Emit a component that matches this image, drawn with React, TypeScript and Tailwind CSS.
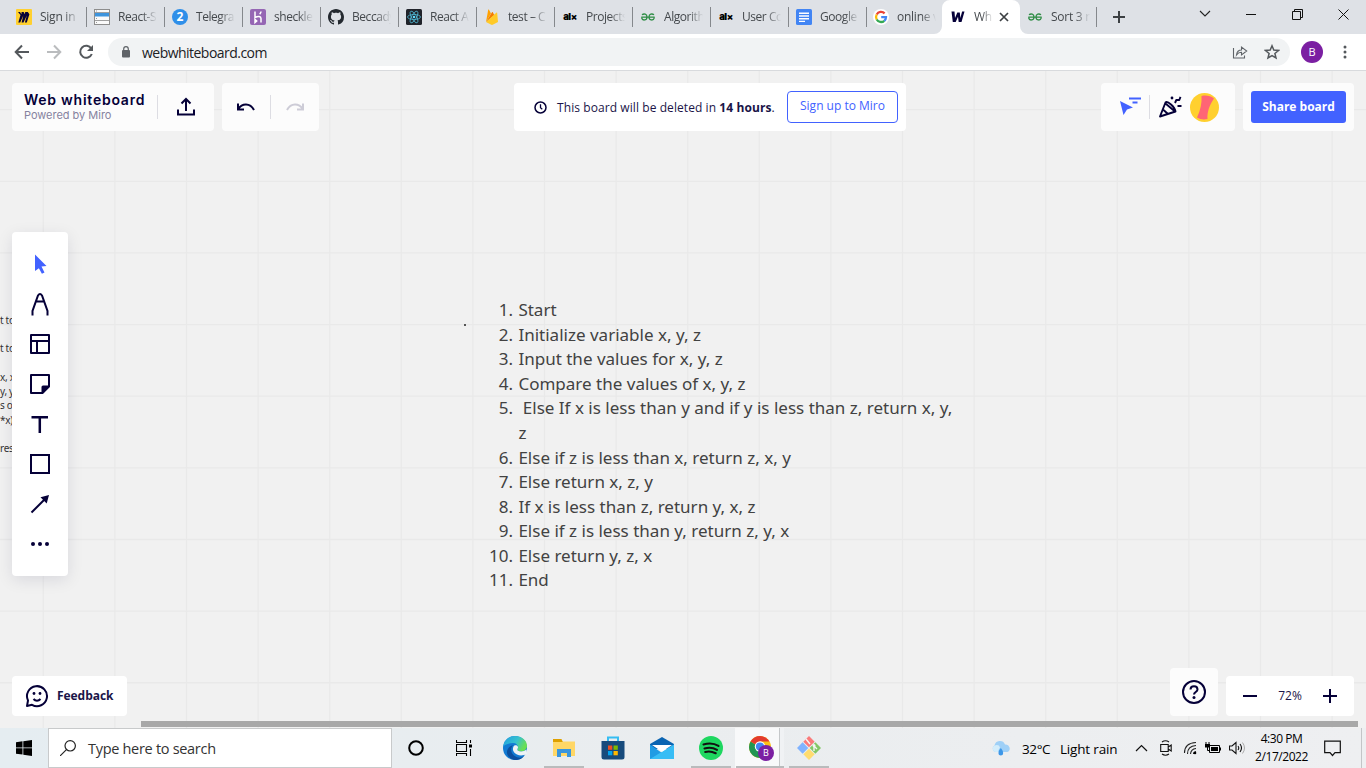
import React from "react";

const ui = "font-['Open_Sans','Noto_Sans',sans-serif]";
const ink = "#050038";

type TabData = { title: string; icon: React.ReactNode; kind?: "first" | "beforeActive" | "active" | "last" };

const MiroIcon = () => (
  <svg width="16" height="16" viewBox="0 0 16 16">
    <rect width="16" height="16" rx="1" fill="#ffd02f" />
    <path d="M2 3h2l1.400 2.300L5.600 3h2l1.300 2.300L9.200 3h2.600l1.600 2.300L10.800 13.500H8.900l1.900-7-3.300 7H5.600l1.800-7.300-3.200 7.300H2.300L4.500 6z" fill={ink} />
  </svg>
);
const ListIcon = () => (
  <svg width="16" height="16" viewBox="0 0 16 16">
    <rect x=".5" y=".5" width="15" height="15" fill="#fafafa" stroke="#8d8d8d" />
    <path d="M1 3.500h14M1 11.500h14" stroke="#888" strokeWidth=".8" />
    <rect x="1" y="4" width="14" height="3.500" fill="#3d94dd" />
    <path d="M2 9.500h1M2 13.500h1M2 2h1" stroke="#999" />
  </svg>
);
const TwoIcon = () => (
  <svg width="16" height="16" viewBox="0 0 16 16">
    <circle cx="8" cy="8" r="8" fill="#2f8fe9" />
    <text x="8" y="12.300" textAnchor="middle" fontSize="12" fontWeight="700" fill="#fff" fontFamily="Open Sans, sans-serif">2</text>
  </svg>
);
const HerokuIcon = () => (
  <svg width="16" height="16" viewBox="0 0 16 16">
    <rect width="16" height="16" rx="2" fill="#9566b4" />
    <path d="M5 2.500v6c3-1.500 6-1.400 6 1V13.500M11 2.500c0 1.200-.6 2-1.300 2.800M5 10.500v3l1.700-1.500z" fill="none" stroke="#fff" strokeWidth="1.500" />
  </svg>
);
const GithubIcon = () => (
  <svg width="16" height="16" viewBox="0 0 16 16" fill="#24292f">
    <path d="M8 0C3.580 0 0 3.580 0 8c0 3.540 2.290 6.530 5.470 7.590.4.070.55-.17.55-.38 0-.19-.01-.82-.01-1.490-2.010.37-2.530-.49-2.690-.94-.09-.23-.48-.94-.82-1.130-.28-.15-.68-.52-.01-.53.63-.01 1.080.58 1.230.82.72 1.210 1.870.87 2.330.66.070-.52.28-.87.51-1.070-1.780-.2-3.640-.89-3.640-3.950 0-.87.31-1.590.82-2.150-.08-.2-.36-1.020.08-2.120 0 0 .67-.21 2.200.82.64-.18 1.320-.27 2-.27s1.360.09 2 .27c1.530-1.040 2.200-.82 2.200-.82.44 1.100.16 1.920.08 2.120.51.56.82 1.270.82 2.150 0 3.070-1.870 3.750-3.650 3.950.29.25.54.73.54 1.480 0 1.070-.01 1.930-.01 2.200 0 .21.15.46.55.38A8.010 8.010 0 0016 8c0-4.420-3.580-8-8-8z" />
  </svg>
);
const ReactIcon = () => (
  <svg width="16" height="16" viewBox="0 0 16 16">
    <rect width="16" height="16" rx="1.500" fill="#20232a" />
    <g fill="none" stroke="#4fb8d3" strokeWidth=".8">
      <ellipse cx="8" cy="8" rx="6.500" ry="2.500" />
      <ellipse cx="8" cy="8" rx="6.500" ry="2.500" transform="rotate(60 8 8)" />
      <ellipse cx="8" cy="8" rx="6.500" ry="2.500" transform="rotate(120 8 8)" />
    </g>
    <circle cx="8" cy="8" r="1.300" fill="#61dafb" />
  </svg>
);
const FirebaseIcon = () => (
  <svg width="16" height="16" viewBox="0 0 16 16">
    <path d="M2 13L4.200.8c.1-.5.6-.5.8-.1l2 3.800z" fill="#ffa000" />
    <path d="M2 13L8 3.200c.2-.4.600-.4.800 0l1.500 3z" fill="#f57c00" />
    <path d="M2 13L12.300 3.700c.3-.3.8-.1.900.3L14 13l-5.300 2.800c-.5.200-1 .2-1.400 0z" fill="#ffca28" />
  </svg>
);
const AlxIcon = () => (
  <span className="w-4 h-4 flex items-center justify-center text-[9.5px] leading-none font-black tracking-[-0.5px] text-black font-['Inter',sans-serif]">al×</span>
);
const GeeksIcon = () => (
  <svg width="16" height="16" viewBox="0 0 16 16">
    <path d="M2 5.800C4 4.300 7 5 7 8c0 3.700-4.500 4-5.400.6M14 5.800C12 4.300 9 5 9 8c0 3.700 4.500 4 5.400.6M1.300 8.200h13.400" fill="none" stroke="#2f8d46" strokeWidth="1.300" />
  </svg>
);
const DocsIcon = () => (
  <svg width="16" height="16" viewBox="0 0 16 16">
    <rect width="16" height="16" rx="1.500" fill="#4285f4" />
    <path d="M3 4.300h10M3 7h10M3 9.700h10M3 12.400h6" stroke="#fff" strokeWidth="1.400" />
  </svg>
);
const GoogleIcon = () => (
  <svg width="16" height="16" viewBox="0 0 16 16">
    <circle cx="8" cy="8" r="8" fill="#fff" />
    <g fill="none" strokeWidth="2.300">
      <path d="M11.600 4.400A5 5 0 003.700 5.500" stroke="#ea4335" />
      <path d="M3.700 5.500a5 5 0 000 5" stroke="#fbbc05" />
      <path d="M3.700 10.500a5 5 0 007.600 1.300" stroke="#34a853" />
      <path d="M11.300 11.800A5 5 0 0013 8.200H8.200" stroke="#4285f4" />
    </g>
  </svg>
);
const WIcon = () => (
  <svg width="16" height="16" viewBox="0 0 16 16">
    <path d="M1.500 2.500h3l.5 6.500 2.300-5.500h2.500l.6 5.500 1.700-6.500h2.400L11.500 13H8.700L8 7.800 5.700 13H2.800z" fill={ink} />
  </svg>
);

const tabs: TabData[] = [
  { title: "Sign in", icon: <MiroIcon />, kind: "first" },
  { title: "React-S", icon: <ListIcon /> },
  { title: "Telegra", icon: <TwoIcon /> },
  { title: "sheckle", icon: <HerokuIcon /> },
  { title: "Beccady", icon: <GithubIcon /> },
  { title: "React A", icon: <ReactIcon /> },
  { title: "test – C", icon: <FirebaseIcon /> },
  { title: "Projects", icon: <AlxIcon /> },
  { title: "Algorith", icon: <GeeksIcon /> },
  { title: "User Co", icon: <AlxIcon /> },
  { title: "Google", icon: <DocsIcon /> },
  { title: "online v", icon: <GoogleIcon />, kind: "beforeActive" },
  { title: "Wh", icon: <WIcon />, kind: "active" },
  { title: "Sort 3 n", icon: <GeeksIcon />, kind: "last" },
];

function Tab({ title, icon, kind }: TabData) {
  if (kind === "active")
    return (
      <div className="relative w-[78px] h-[34px] bg-white rounded-t-lg flex items-center pl-2">
        <svg className="absolute -left-2 bottom-0" width="8" height="8"><path d="M8 0v8H0a8 8 0 008-8z" fill="#fff" /></svg>
        <svg className="absolute -right-2 bottom-0" width="8" height="8"><path d="M0 0v8h8a8 8 0 01-8-8z" fill="#fff" /></svg>
        {icon}
        <span className="ml-2 w-[19px] whitespace-nowrap text-[12px] tracking-[-0.3px] text-[#45494d] [mask-image:linear-gradient(to_right,#000_40%,transparent)]">{title}</span>
        <svg className="ml-[6px]" width="10" height="10" viewBox="0 0 10 10"><path d="M1 1l8 8M9 1l-8 8" stroke="#3c4043" strokeWidth="1.700" /></svg>
      </div>
    );
  const plain = kind === "first" || kind === "last";
  return (
    <div className={`${kind === "last" ? "w-[77px]" : kind === "beforeActive" ? "w-[76px]" : "w-[78px]"} h-[34px] flex items-center ${kind === "last" ? "pl-[7px]" : kind === "first" ? "pl-2" : ""}`}>
      {!plain && <span className={`${kind === "beforeActive" ? "mr-[6px]" : "mr-[7px]"} w-px h-5 bg-[#85888c]`} />}
      {icon}
      <span className={`ml-2 w-[40px] whitespace-nowrap text-[12px] text-[#45494d] [mask-image:linear-gradient(to_right,#000_60%,transparent_98%)] ${kind ? "tracking-[-0.25px]" : "tracking-[-0.45px]"}`}>{title}</span>
      {kind === "last" && <span className="ml-auto w-px h-5 bg-[#85888c]" />}
    </div>
  );
}

function TabBar() {
  return (
    <div className="h-[34px] bg-[#dee1e6] flex items-center pl-2">
      <div className="flex">{tabs.map((t, i) => <Tab key={i} {...t} />)}</div>
      <svg className="ml-4" width="12" height="12"><path d="M6 0v12M0 6h12" stroke="#3c4043" strokeWidth="2" /></svg>
      <div className="ml-auto flex items-center pb-[6px] pr-[17px]">
        <svg width="12" height="8" className="mr-[35px]"><path d="M1 1l5 5 5-5" fill="none" stroke="#222" strokeWidth="1.100" /></svg>
        <svg width="10" height="10" className="mr-9"><path d="M0 5.500h10" stroke="#111" /></svg>
        <svg width="11" height="11" className="mr-[35px]"><path d="M.5 2.500h8v8h-8zM2.500 2.500v-2h8v8h-2" fill="none" stroke="#111" /></svg>
        <svg width="11" height="11"><path d="M.5.5l10 10M10.500.5l-10 10" stroke="#111" /></svg>
      </div>
    </div>
  );
}

function AddressBar() {
  return (
    <div className="h-[37px] bg-white border-b border-[#d8dadd] flex items-center pl-[14px]">
      <svg width="16" height="16" viewBox="0 0 16 16" className="mr-4"><path d="M15 8H2M8 1.500L1.700 8 8 14.500" fill="none" stroke="#54585c" strokeWidth="2" /></svg>
      <svg width="16" height="16" viewBox="0 0 16 16" className="mr-4"><path d="M1 8h13M8 1.500L14.300 8 8 14.500" fill="none" stroke="#babcbe" strokeWidth="2" /></svg>
      <svg width="16" height="16" viewBox="0 0 16 16" className="mr-[14px]"><path d="M13.300 4.600A6 6 0 1013.800 10" fill="none" stroke="#54585c" strokeWidth="2" /><path d="M15 1v6H9z" fill="#54585c" /></svg>
      <div className="w-[1182px] h-7 rounded-full bg-[#f1f3f4] flex items-center pl-[13px] pr-[10px]">
        <svg width="10" height="12" viewBox="0 0 10 12"><rect x="1" y="4" width="8" height="7.500" rx="1" fill="#5f6368" /><path d="M2.700 5V3a2.300 2.300 0 014.600 0v2" fill="none" stroke="#5f6368" strokeWidth="1.200" /></svg>
        <span className="ml-[11px] text-[14px] tracking-[-0.53px] text-[#202124]">webwhiteboard.com</span>
        <svg className="ml-auto" width="16" height="16" viewBox="0 0 16 16"><path d="M1.500 4v10h11V11.500M4.500 11c.4-3.300 2-5 5-5V3L14.700 7 9.500 11V8.300C7.500 8.200 6 9 4.500 11z" fill="none" stroke="#5f6368" strokeWidth="1.100" /></svg>
        <svg className="ml-4" width="16" height="16" viewBox="0 0 16 16"><path d="M8 1.800l1.800 4.300 4.700.4-3.600 3 1.100 4.500L8 11.600 4 14l1.100-4.500-3.600-3 4.700-.4z" fill="none" stroke="#54585c" strokeWidth="1.500" /></svg>
      </div>
      <div className="ml-[11px] w-[22px] h-[22px] rounded-full bg-[#7b1fa2] text-white text-[11px] flex items-center justify-center">B</div>
      <svg className="ml-[20px]" width="4" height="14"><g fill="#54585c"><circle cx="2" cy="2" r="1.500" /><circle cx="2" cy="7" r="1.500" /><circle cx="2" cy="12" r="1.500" /></g></svg>
    </div>
  );
}

function Grid() {
  const xs = Array.from({ length: 19 }, (_, i) => 43.3 + i * 71.6);
  const ys = Array.from({ length: 9 }, (_, i) => 38.700 + i * 71.63);
  return (
    <svg className="absolute inset-0" width="1366" height="657">
      <g stroke="#e9e9e9" strokeWidth="1.300">
        {xs.map((x) => <line key={x} x1={x} x2={x} y1="0" y2="657" />)}
        {ys.map((y) => <line key={y} x1="0" x2="1366" y1={y} y2={y} />)}
      </g>
    </svg>
  );
}

const steps = [
  "Start",
  "Initialize variable x, y, z",
  "Input the values for x, y, z",
  "Compare the values of x, y, z",
  "\u00a0Else If x is less than y and if y is less than z, return x, y, z",
  "Else if z is less than x, return z, x, y",
  "Else return x, z, y",
  "If x is less than z, return y, x, z",
  "Else if z is less than y, return z, y, x",
  "Else return y, z, x",
  "End",
];

function BoardText() {
  return (
    <ol className="absolute left-[479px] top-[227.3px] w-[477px] font-['Noto_Sans',sans-serif] text-[17.03px] leading-[24.55px] text-[#424242]">
      {steps.map((s, i) => (
        <li key={i} className="flex">
          <span className="w-[34px] mr-[5.4px] shrink-0 text-right">{i + 1}.</span>
          <span>{s}</span>
        </li>
      ))}
    </ol>
  );
}

function Fragments() {
  return (
    <div className="absolute left-0 top-[241.5px] w-4 whitespace-nowrap font-['Noto_Sans',sans-serif] text-[10px] leading-[14.3px] tracking-[-0.3px] text-[#333]">
      <div>t to</div><div>&nbsp;</div><div>t to</div><div>&nbsp;</div><div>x, x</div><div>y, y</div><div>s of</div><div>*x)</div><div>&nbsp;</div><div>res</div>
    </div>
  );
}

function TopPanels() {
  return (
    <div className="absolute inset-x-3 top-3 h-12 flex">
      <div className="w-[202px] rounded bg-[#fcfcfc] flex items-center pl-3">
        <div className="w-[133px] -mt-px font-['Inter',sans-serif]">
          <div className="text-[14px] leading-[17px] font-semibold tracking-[0.75px] text-[#050038]">Web whiteboard</div>
          <div className="text-[11px] leading-[14px] tracking-[-0.02px] text-[#8683a0]">Powered by Miro</div>
        </div>
        <span className="w-px h-6 bg-[#dddde3]" />
        <svg className="ml-[18px]" width="20" height="20" viewBox="0 0 20 20"><path d="M2 12.500v5h16v-5M10 14V2.500M5.500 6.500L10 2l4.500 4.500" fill="none" stroke={ink} strokeWidth="2" /></svg>
      </div>
      <div className="ml-2 w-[97px] rounded bg-[#fcfcfc] flex items-center pl-[14px]">
        <svg width="20" height="14" viewBox="0 0 20 14"><path d="M2 3.500v6h6M2.300 9C6 3 14 2.500 18 10" fill="none" stroke={ink} strokeWidth="2" /></svg>
        <span className="ml-[14px] w-px h-6 bg-[#dddde3]" />
        <svg className="ml-[14px]" width="20" height="14" viewBox="0 0 20 14"><path d="M18 3.500v6h-6M17.700 9C14 3 6 2.500 2 10" fill="none" stroke="#cdccd7" strokeWidth="2" /></svg>
      </div>
      <div className="ml-[195px] w-[392px] rounded bg-white flex items-center pl-5">
        <svg width="13" height="13" viewBox="0 0 13 13"><circle cx="6.500" cy="6.500" r="5.500" fill="none" stroke={ink} strokeWidth="1.500" /><path d="M6.500 3.300v3.500l1.800 1.400" fill="none" stroke={ink} strokeWidth="1.300" /></svg>
        <span className="ml-[10px] pt-px w-[230px] whitespace-nowrap text-[12px] tracking-[0.08px] text-[#1a1548]">This board will be deleted in <b>14 hours</b>.</span>
        <span className="w-[111px] h-8 rounded border border-[#4262ff] text-[#4262ff] text-[12px] flex items-center justify-center pb-0.5">Sign up to Miro</span>
      </div>
      <div className="ml-auto w-[134px] rounded bg-[#fcfcfc] flex items-center pl-[18px]">
        <svg width="22" height="20" viewBox="0 0 22 20"><path d="M1 4l13 6.500-6 2-3.500 5.500z" fill="#4262ff" /><path d="M10 1.500h12M13.500 5.500h5" stroke="#4262ff" strokeWidth="2" /></svg>
        <span className="ml-2 w-px h-6 bg-[#dddde3]" />
        <svg className="ml-2" width="24" height="24" viewBox="0 0 24 24"><path d="M2 21.500L7.500 7.500Q9 6 13 9.500T17.500 16.500zM7.500 8.500l9.500 8M5 14.500l5 4.500M17 8l1.300-3h3L22.500 1.800M19.500 11h4" fill="none" stroke={ink} strokeWidth="1.900" strokeLinejoin="round" /><circle cx="14" cy="3" r="1.400" fill={ink} /></svg>
        <svg className="ml-2" width="29" height="29" viewBox="0 0 29 29"><circle cx="14.500" cy="14.500" r="14.500" fill="#ffd02f" /><path d="M11.500 3C16 2 20 2.500 24 5.500C19.500 12 17 19 17.500 26C14 27 10 26.500 7 24.500C10.500 17 12 10 11.500 3z" fill="#ff6575" /></svg>
      </div>
      <div className="ml-2 w-[111px] rounded bg-[#fcfcfc] flex items-center justify-center">
        <span className="w-[95px] h-8 rounded-[3px] bg-[#4262ff] text-white text-[12px] font-bold flex items-center justify-center">Share board</span>
      </div>
    </div>
  );
}

const tools: React.ReactNode[] = [
  <path d="M7 2.500l11.500 11.500-5 .6 3 6-2.600 1.200-3-5.500L7 19z" fill="#4262ff" />,
  <path d="M4.500 23.500v-4.500L10 3.500Q12 .5 14 3.500L19.500 19v4.500M8 9.500h8" fill="none" stroke={ink} strokeWidth="2" />,
  <path d="M3 3h18v18H3zM3 9h18M9 9V21" fill="none" stroke={ink} strokeWidth="2" strokeLinejoin="round" />,
  <g><path d="M3 3h18v11.500L14.500 21H3z" fill="none" stroke={ink} strokeWidth="2" strokeLinejoin="round" /><path d="M13.500 21.500V15q0-1.500 1.500-1.500h6.500z" fill={ink} /></g>,
  <path d="M3.500 5.200h16.500M11.800 5v16" fill="none" stroke={ink} strokeWidth="2.500" />,
  <path d="M3 3h18v18H3z" fill="none" stroke={ink} strokeWidth="2" />,
  <g><path d="M3.500 20.500L17 7" stroke={ink} strokeWidth="2" /><path d="M21 3l-2.300 8.500-6.200-6.200z" fill={ink} /></g>,
  <g fill={ink}><circle cx="5" cy="12" r="2" /><circle cx="12" cy="12" r="2" /><circle cx="19" cy="12" r="2" /></g>,
];

function ToolPalette() {
  return (
    <div className="absolute left-3 top-[161px] w-14 h-[344px] rounded bg-white py-3 shadow-[0_4px_16px_rgba(5,0,56,0.1)] flex flex-col items-center">
      {tools.map((t, i) => (
        <span key={i} className="h-10 flex items-center"><svg width="24" height="24" viewBox="0 0 24 24">{t}</svg></span>
      ))}
    </div>
  );
}

function BottomPanels() {
  return (
    <div className="absolute inset-x-3 bottom-3 h-12 flex items-end">
      <div className="w-[115px] h-10 rounded bg-white flex items-center pl-[13px]">
        <svg width="24" height="24" viewBox="0 0 24 24"><path d="M2 22l1-5.500A10 10 0 117 20.800zM8.500 15c2 2.200 5 2.200 7 0" fill="none" stroke={ink} strokeWidth="2" strokeLinejoin="round" /><circle cx="9" cy="9.500" r="1.400" fill={ink} /><circle cx="15" cy="9.500" r="1.400" fill={ink} /></svg>
        <span className="ml-2 text-[12px] font-bold tracking-[-0.05px] text-[#1a1548]">Feedback</span>
      </div>
      <div className="ml-auto w-12 h-12 rounded bg-[#fcfcfc] flex items-center justify-center">
        <svg width="24" height="24" viewBox="0 0 24 24"><circle cx="12" cy="12" r="11" fill="none" stroke={ink} strokeWidth="2" /><path d="M8.500 9.500c0-4.500 7-4.500 7 0 0 2.500-3.500 2.500-3.500 5" fill="none" stroke={ink} strokeWidth="2" /><circle cx="12" cy="17.500" r="1.500" fill={ink} /></svg>
      </div>
      <div className="ml-2 w-32 h-10 rounded bg-white flex items-center justify-between pl-[17px] pr-[17px]">
        <svg width="14" height="14"><path d="M0 7h14" stroke={ink} strokeWidth="2" /></svg>
        <span className="text-[12px] text-[#1a1548]">72%</span>
        <svg width="14" height="14"><path d="M0 7h14M7 0v14" stroke={ink} strokeWidth="2" /></svg>
      </div>
    </div>
  );
}

const EdgeIcon = () => (
  <svg width="24" height="24" viewBox="0 0 24 24">
    <defs>
      <linearGradient id="eg" x1="0" y1="0" x2="1" y2=".4"><stop offset="0" stopColor="#1f9fe0" /><stop offset=".6" stopColor="#36c1cf" /><stop offset="1" stopColor="#68df53" /></linearGradient>
    </defs>
    <circle cx="12" cy="12" r="12" fill="#127ad2" />
    <path d="M0 11C1 4 6 0 12 0c7 0 12 4.500 12 10 0 3.500-3 5.500-6 5.500-2.500 0-4-1-3.500-2.500 1.500-2.500-.5-6-4.500-6S1 9 0 11z" fill="url(#eg)" />
    <path d="M10 9c-4 5-1 11 5 12.500 2.500.5 5-.5 6.500-2C18 25 10 25.500 6 21c-4-4-2-10 4-12z" fill="#0c4f9e" />
    <path d="M10.500 10.500c1-2 4-1.500 4.500.5.200 1.500-1.500 2.500 0 3.700 2.500 1.500 6 .8 8.500-1.200l.5 4.500c-3 1.500-7 2-10 .5-3.500-1.500-5-5-3.500-8z" fill="#eef3f5" />
  </svg>
);
const FolderIcon = () => (
  <svg width="22" height="20" viewBox="0 0 22 20"><path d="M0 1.500h8l2 2h12V18H0z" fill="#ffd766" /><path d="M0 1h8.500l1.200 3H0z" fill="#dea000" /><path d="M4 19v-8h14v8h-4v-4H8v4z" fill="#3a96dd" /></svg>
);
const StoreIcon = () => (
  <svg width="24" height="24" viewBox="0 0 24 24"><path d="M7 6V1.500h10V6" fill="none" stroke="#35bdf2" strokeWidth="2" /><path d="M.5 5h23v16q0 2.500-2.500 2.500H3Q.5 23.500.5 21z" fill="#174b7c" /><path d="M7 9.500h4.300v4.300H7z" fill="#f25022" /><path d="M12.500 9.500h4.300v4.300h-4.300z" fill="#7fba00" /><path d="M7 15h4.300v4.300H7z" fill="#00a4ef" /><path d="M12.500 15h4.300v4.300h-4.300z" fill="#ffb900" /></svg>
);
const MailIcon = () => (
  <svg width="24" height="24" viewBox="0 0 24 24"><path d="M0 8L12 1l12 7v5H0z" fill="#0a64b2" /><path d="M0 8.500L12 17 24 8.500V23H0z" fill="#1f9be4" /><path d="M24 8.500V23H0z" fill="#38bdf5" /><path d="M2 9h20L12 15.800z" fill="#fff" /></svg>
);
const SpotifyIcon = () => (
  <svg width="24" height="24" viewBox="0 0 24 24"><circle cx="12" cy="12" r="12" fill="#1ed760" /><path d="M4.500 8.500c5-1.500 11-1 15 1.400M5.500 12.500c4-1.200 9-.7 12.500 1.300M6.200 16c3.500-1 7-.5 10.500 1.200" fill="none" stroke="#111" strokeWidth="2.100" strokeLinecap="round" /></svg>
);
const ChromeIcon = () => (
  <svg className="ml-[3px]" width="26" height="26" viewBox="0 0 26 26">
    <circle cx="12" cy="12" r="11" fill="#fbc116" />
    <path d="M12 12L2.500 6.500A11 11 0 0012 23l4.500-8z" fill="#219653" />
    <path d="M12 12L2.500 6.500A11 11 0 0121.500 6.500H12z" fill="#e33b2e" />
    <circle cx="12" cy="11.500" r="5.200" fill="#fff" /><circle cx="12" cy="11.500" r="4.100" fill="#4285f4" />
    <circle cx="18" cy="18" r="8" fill="#7b1fa2" />
    <text x="18" y="21.300" textAnchor="middle" fontSize="9" fill="#fff" fontFamily="Open Sans, sans-serif">B</text>
  </svg>
);
const GitIcon = () => (
  <svg width="24" height="24" viewBox="0 0 24 24"><g transform="rotate(45 12 12)"><path d="M3.500 3.500h8v8h-8z" fill="#fa7a7a" /><path d="M12.500 3.500h8v8h-8z" fill="#82c766" /><path d="M3.500 12.500h8v8h-8z" fill="#80b3ff" /><path d="M12.500 12.500h8v8h-8z" fill="#ffdc70" /></g><path d="M9 3l4 5M17 15v-5l3 3" fill="none" stroke="#f5f5f5" strokeWidth="1.400" /><circle cx="17" cy="9.500" r="1.500" fill="#f5f5f5" /></svg>
);

const apps: { icon: React.ReactNode; cls: string; bar?: string }[] = [
  { icon: <EdgeIcon />, cls: "" },
  { icon: <FolderIcon />, cls: "", bar: "w-10" },
  { icon: <StoreIcon />, cls: "" },
  { icon: <MailIcon />, cls: "" },
  { icon: <SpotifyIcon />, cls: "", bar: "w-10" },
  { icon: <ChromeIcon />, cls: "bg-[linear-gradient(to_right,#f8f9fa_44px,#c5c8ca_44px,#c5c8ca_45px,#f0f2f4_45px)]", bar: "w-12" },
  { icon: <GitIcon />, cls: "", bar: "w-10" },
];

function TaskBar() {
  return (
    <div className="h-10 bg-[linear-gradient(to_right,#e5edf1,#eaedef_50%,#eeeff1)] flex items-stretch text-black">
      <div className="w-12 flex items-center justify-center">
        <svg width="16" height="16" viewBox="0 0 16 16"><path d="M0 2.200l6.500-.9v6.200H0zM7.300 1.200L16 0v7.500H7.300zM0 8.300h6.500v6.300L0 13.700zM7.300 8.300H16V16l-8.700-1.200z" /></svg>
      </div>
      <div className="w-[344px] bg-white border border-[#c8cacb] flex items-center pl-[11px]">
        <svg width="16" height="16" viewBox="0 0 16 16"><circle cx="10.200" cy="5.800" r="5.200" fill="none" stroke="#222" strokeWidth="1.200" /><path d="M6.400 9.600L0 16" stroke="#222" strokeWidth="1.200" /></svg>
        <span className="ml-3 pt-0.5 text-[14.500px] tracking-[-0.3px] text-[#333]">Type here to search</span>
      </div>
      <div className="w-12 flex items-center justify-center"><svg width="16" height="16"><circle cx="8" cy="8" r="6.800" fill="none" stroke="#000" strokeWidth="2" /></svg></div>
      <div className="w-[50px] flex items-center justify-center pr-0.5"><svg width="17" height="16" viewBox="0 0 17 16"><path d="M.5 0v2.500h10V0M.5 4.500h10v7H.5zM.5 16v-2.500h10V16M14.500 0v3M14.500 9v7" fill="none" stroke="#000" strokeWidth="1.100" /><path d="M13 4.500h3v3h-3z" /></svg></div>
      {apps.map((a, i) => (
        <div key={i} className={`relative w-[49px] flex items-center justify-center ${a.cls}`}>
          {a.icon}
          {a.bar && <span className={`absolute bottom-0 h-0.5 bg-[#b9bbbc] ${a.bar}`} />}
        </div>
      ))}
      <div className="ml-auto flex items-center">
        <svg width="20" height="16" viewBox="0 0 20 16"><path d="M4.500 12A3.500 3.500 0 013.500 5.500 5.500 5.500 0 0114 4.500a4 4 0 012.500 7.500z" fill="#9fd0f7" /><path d="M4.500 12A3.500 3.500 0 013.500 5.500Q8 4 9 7.500 7 10 7.500 12z" fill="#d3edfb" /><path d="M9.800 8c3.500 4 2.700 7.500 0 7.500s-3.500-3.500 0-7.500z" fill="#3d97e8" /></svg>
        <span className="ml-[11px] w-[38px] pt-0.5 whitespace-nowrap text-[13.500px] tracking-[-0.4px]">32°C</span>
        <span className="w-[75px] pt-0.5 whitespace-nowrap text-[13.500px] tracking-[-0.18px]">Light rain</span>
        <svg width="13" height="8"><path d="M1 7l5.500-5.500L12 7" fill="none" stroke="#111" strokeWidth="1.200" /></svg>
        <svg className="ml-3" width="12" height="16" viewBox="0 0 12 16"><path d="M2 2q3.500-2.500 7 0M2 14q3.500 2.500 7 0M.7 4.500h7.500v7H.7zM8.200 7l3-2v6l-3-2" fill="none" stroke="#111" strokeWidth="1.100" /></svg>
        <svg className="ml-[11px]" width="14" height="14" viewBox="0 0 14 14"><path d="M1.500 12Q1.500 2 13 1.500M4.500 13Q4.500 5 13 4.500M7.500 13Q8 8 13 7.500M10.500 13q0-2 2.500-2.500" fill="none" stroke="#222" strokeWidth="1.100" /><circle cx="12" cy="12" r="1.300" /></svg>
        <svg className="ml-2" width="16" height="12" viewBox="0 0 16 12"><path d="M4.500 3.500h10v7h-10z" fill="none" stroke="#000" strokeWidth="1" /><path d="M6 5h7v4H6zM15 5.500h1v3h-1zM0 2h5v3.500H0z" /><path d="M1 0v2M4 0v2M2.500 5v3.500H5" fill="none" stroke="#000" /></svg>
        <svg className="ml-2" width="17" height="14" viewBox="0 0 17 14"><path d="M.5 5h2.500l4-3.500v11L3 9H.500zM9 5q1.500 2 0 4M11 3q3 4 0 8" fill="none" stroke="#111" strokeWidth="1.100" /><path d="M13.500 1.500q4 5.500 0 11" fill="none" stroke="#aaa" /></svg>
        <div className="w-[71px] text-center whitespace-nowrap text-[12px] leading-[18px] tracking-[-0.45px]"><div>4:30 PM</div><div>2/17/2022</div></div>
        <svg className="ml-[7px]" width="17" height="17" viewBox="0 0 17 17"><path d="M.7 1.200h15.600v11.500h-5.300l-2.500 2.800L6 12.700H.7z" fill="none" stroke="#111" strokeWidth="1.200" /></svg>
        <span className="ml-5 mr-1 w-px h-10 bg-[#c3c5c7]" />
      </div>
    </div>
  );
}

export default function App() {
  return (
    <div className={`w-[1366px] h-[768px] overflow-hidden flex flex-col ${ui}`}>
      <TabBar />
      <AddressBar />
      <main className="relative h-[657px] bg-[#f1f1f1] overflow-hidden">
        <Grid />
        <Fragments />
        <span className="absolute left-[464px] top-[253px] w-[2px] h-[2px] bg-[#555]" />
        <BoardText />
        <TopPanels />
        <ToolPalette />
        <BottomPanels />
        <div className="absolute left-[141px] top-[650px] w-[1217px] h-1.5 bg-[#a8a8a8]" />
      </main>
      <TaskBar />
    </div>
  );
}
